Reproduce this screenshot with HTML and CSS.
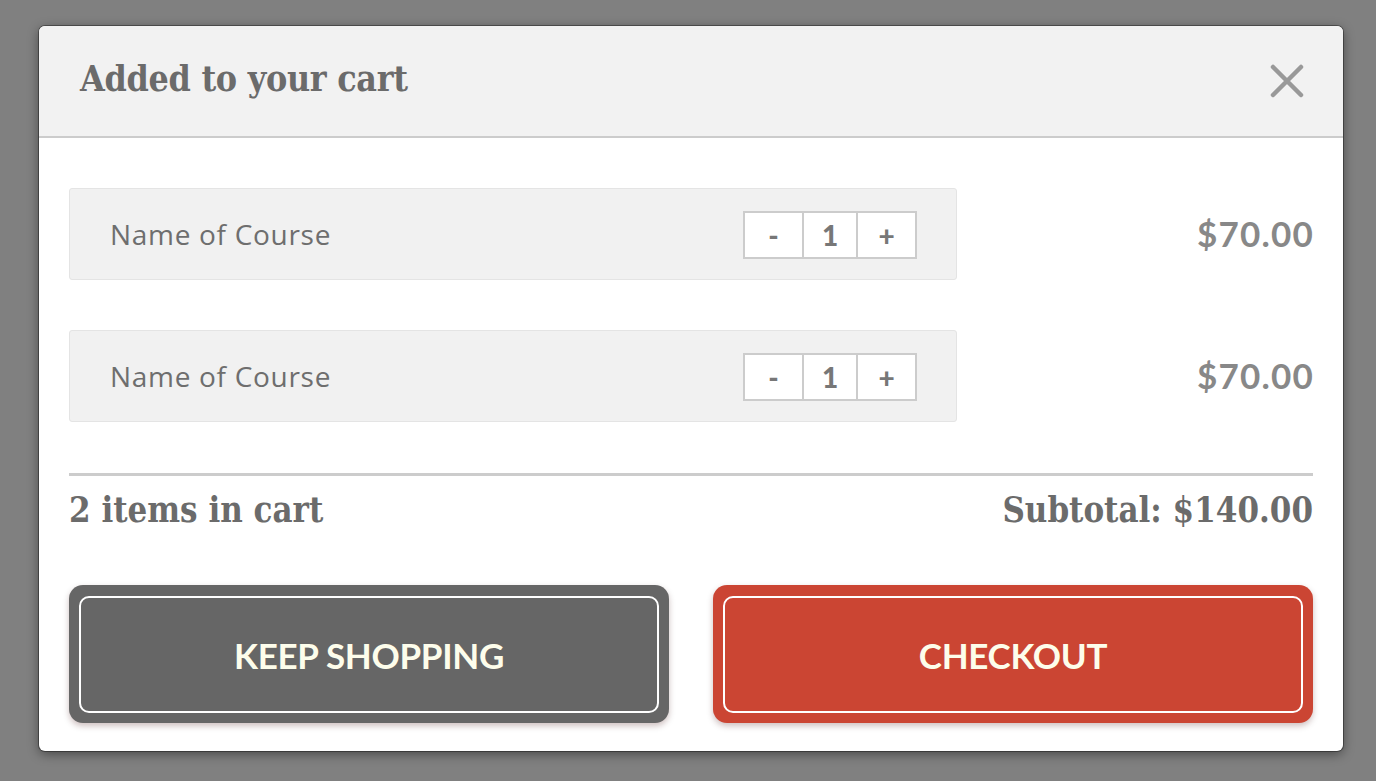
FILE: index.html
```html
<!DOCTYPE html>
<html lang="en">
<head>
<meta charset="utf-8">
<title>Added to your cart</title>
<link rel="stylesheet" href="styles.css">
</head>
<body>
<div class="modal">
  <header class="modal-header">
    <h1 class="modal-title">Added to your cart</h1>
    <button class="close" aria-label="Close">
      <svg width="34" height="34" viewBox="0 0 34 34"><path d="M3 3 L31 31 M31 3 L3 31" stroke="#999" stroke-width="4.5" stroke-linecap="round" fill="none"/></svg>
    </button>
  </header>
  <div class="modal-body">
    <div class="items">
      <div class="item">
        <div class="item-box">
          <span class="item-name">Name of Course</span>
          <div class="qty">
            <button class="qty-btn">-</button>
            <span class="qty-val">1</span>
            <button class="qty-btn">+</button>
          </div>
        </div>
        <div class="price">$70.00</div>
      </div>
      <div class="item">
        <div class="item-box">
          <span class="item-name">Name of Course</span>
          <div class="qty">
            <button class="qty-btn">-</button>
            <span class="qty-val">1</span>
            <button class="qty-btn">+</button>
          </div>
        </div>
        <div class="price">$70.00</div>
      </div>
    </div>
    <div class="summary">
      <span class="count">2 items in cart</span>
      <span class="subtotal">Subtotal: $140.00</span>
    </div>
    <div class="actions">
      <button class="btn btn-keep"><span class="btn-inner">KEEP SHOPPING</span></button>
      <button class="btn btn-checkout"><span class="btn-inner">CHECKOUT</span></button>
    </div>
  </div>
</div>
</body>
</html>
```
FILE: styles.css
```css
* { box-sizing: border-box; }
html, body { margin: 0; padding: 0; }
body {
  background: #808080;
  width: 1376px;
  height: 781px;
  padding: 26px 0 0 39px;
  font-family: "Open Sans", "Liberation Sans", sans-serif;
  overflow: hidden;
}
button { font: inherit; border: 0; background: none; padding: 0; margin: 0; cursor: pointer; }
.modal {
  width: 1304px;
  height: 725px;
  background: #fff;
  border-radius: 6px;
  box-shadow: 0 0 0 1px rgba(0,0,0,0.35), 0 3px 12px rgba(0,0,0,0.45);
  overflow: hidden;
}
.modal-header {
  height: 112px;
  background: #f2f2f2;
  border-bottom: 2px solid #cccccc;
  display: flex;
  align-items: center;
  justify-content: space-between;
  padding: 0 39px 0 41px;
}
.modal-title {
  margin: 0;
  font-family: "DejaVu Serif", serif;
  font-weight: bold;
  font-stretch: condensed;
  font-size: 35.5px;
  color: #6b6b6b;
  letter-spacing: -0.3px;
  padding-bottom: 5px;
}
.close { width: 34px; height: 34px; display: flex; margin-bottom: 1px; }
.modal-body { padding: 50px 30px 28px; }
.items { display: flex; flex-direction: column; gap: 50px; }
.item { display: flex; align-items: center; justify-content: space-between; }
.item-box {
  width: 888px;
  height: 92px;
  background: #f1f1f1;
  border: 1px solid #e4e4e4;
  border-radius: 3px;
  display: flex;
  align-items: center;
  justify-content: space-between;
  padding: 0 39px 0 40px;
}
.item-name {
  font-family: "Open Sans", sans-serif;
  font-size: 28px;
  letter-spacing: 0.7px;
  color: #6e6e6e;
  padding-bottom: 1px;
}
.qty {
  display: flex;
  height: 48px;
  border: 2px solid #cccccc;
  background: #fff;
  margin-top: 1px;
}
.qty-btn, .qty-val {
  display: flex;
  align-items: center;
  justify-content: center;
  font-family: "Lato", sans-serif;
  font-weight: 900;
  font-size: 28px;
  color: #777;
  height: 100%;
}
.qty-btn:first-child { width: 57px; }
.qty-btn:last-child { width: 57px; }
.qty-val { width: 56px; border-left: 2px solid #ccc; border-right: 2px solid #ccc; }
.price {
  font-family: "Lato", sans-serif;
  font-weight: bold;
  font-size: 35px;
  letter-spacing: 1.2px;
  margin-right: -1px;
  color: #888;
  padding-bottom: 2px;
}
.summary {
  margin-top: 51px;
  border-top: 3px solid #cccccc;
  display: flex;
  justify-content: space-between;
  align-items: center;
  height: 74px;
  padding-bottom: 4px;
  font-family: "DejaVu Serif", serif;
  font-weight: bold;
  font-stretch: condensed;
  font-size: 34.5px;
  color: #6b6b6b;
}
.actions {
  margin-top: 38px;
  display: flex;
  gap: 44px;
}
.btn {
  width: 600px;
  height: 138px;
  border-radius: 14px;
  padding: 11px 10px 10px;
  display: flex;
  box-shadow: 0 3px 6px rgba(60,0,0,0.25);
}
.btn-keep { background: #666666; }
.btn-checkout { background: #cb4533; }
.btn-inner {
  flex: 1;
  border: 2px solid #fff;
  border-radius: 10px;
  display: flex;
  align-items: center;
  justify-content: center;
  font-family: "Lato", sans-serif;
  font-weight: bold;
  font-size: 35px;
  color: #fdfdeb;
  letter-spacing: -0.3px;
}
```
